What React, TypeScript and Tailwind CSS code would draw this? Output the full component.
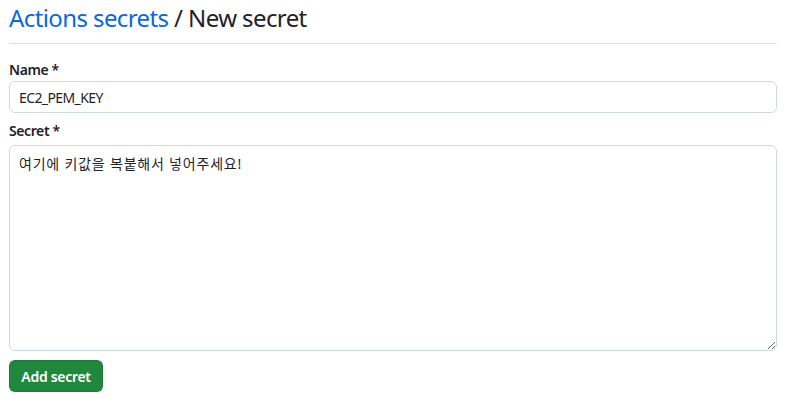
import React from "react";

export default function App() {
  const font = { fontFamily: '"Segoe UI", "Noto Sans", "Noto Sans CJK KR", sans-serif' };
  return (
    <div className="w-[792px] h-[408px] bg-white text-[#1f2328]" style={font}>
      <div className="pl-[9px] pr-[15px]">
        <div className="border-b border-[#d8dee4] pt-[2px] pb-[9px] mb-[15px]">
          <h1 className="text-[24px] leading-[32px] font-normal tracking-[-0.6px]">
            <a className="text-[#0969da]">Actions secrets</a>
            <span> / New secret</span>
          </h1>
        </div>
        <label className="block text-[14px] font-semibold leading-[21px] mb-[1px] tracking-[-0.4px]">Name *</label>
        <input
          className="block w-full h-[32px] border border-[#d0d7de] rounded-[6px] px-[9px] text-[14px] text-[#1f2328] outline-none tracking-[-0.6px]"
          defaultValue="EC2_PEM_KEY"
        />
        <label className="block text-[14px] font-semibold leading-[21px] mt-[7px] mb-[4px] tracking-[-0.4px]">Secret *</label>
        <textarea
          className="block w-full h-[206px] border border-[#d0d7de] rounded-[6px] px-[9px] py-[8px] text-[14px] leading-[20px] text-[#1f2328] outline-none resize-y tracking-[0.8px]"
          defaultValue="여기에 키값을 복붙해서 넣어주세요!"
        />
        <button className="mt-[9px] h-[32px] w-[94px] rounded-[6px] bg-[#1f883d] text-white text-[14px] font-semibold border border-[rgba(31,35,40,0.15)] tracking-[-0.3px]">
          Add secret
        </button>
      </div>
    </div>
  );
}
